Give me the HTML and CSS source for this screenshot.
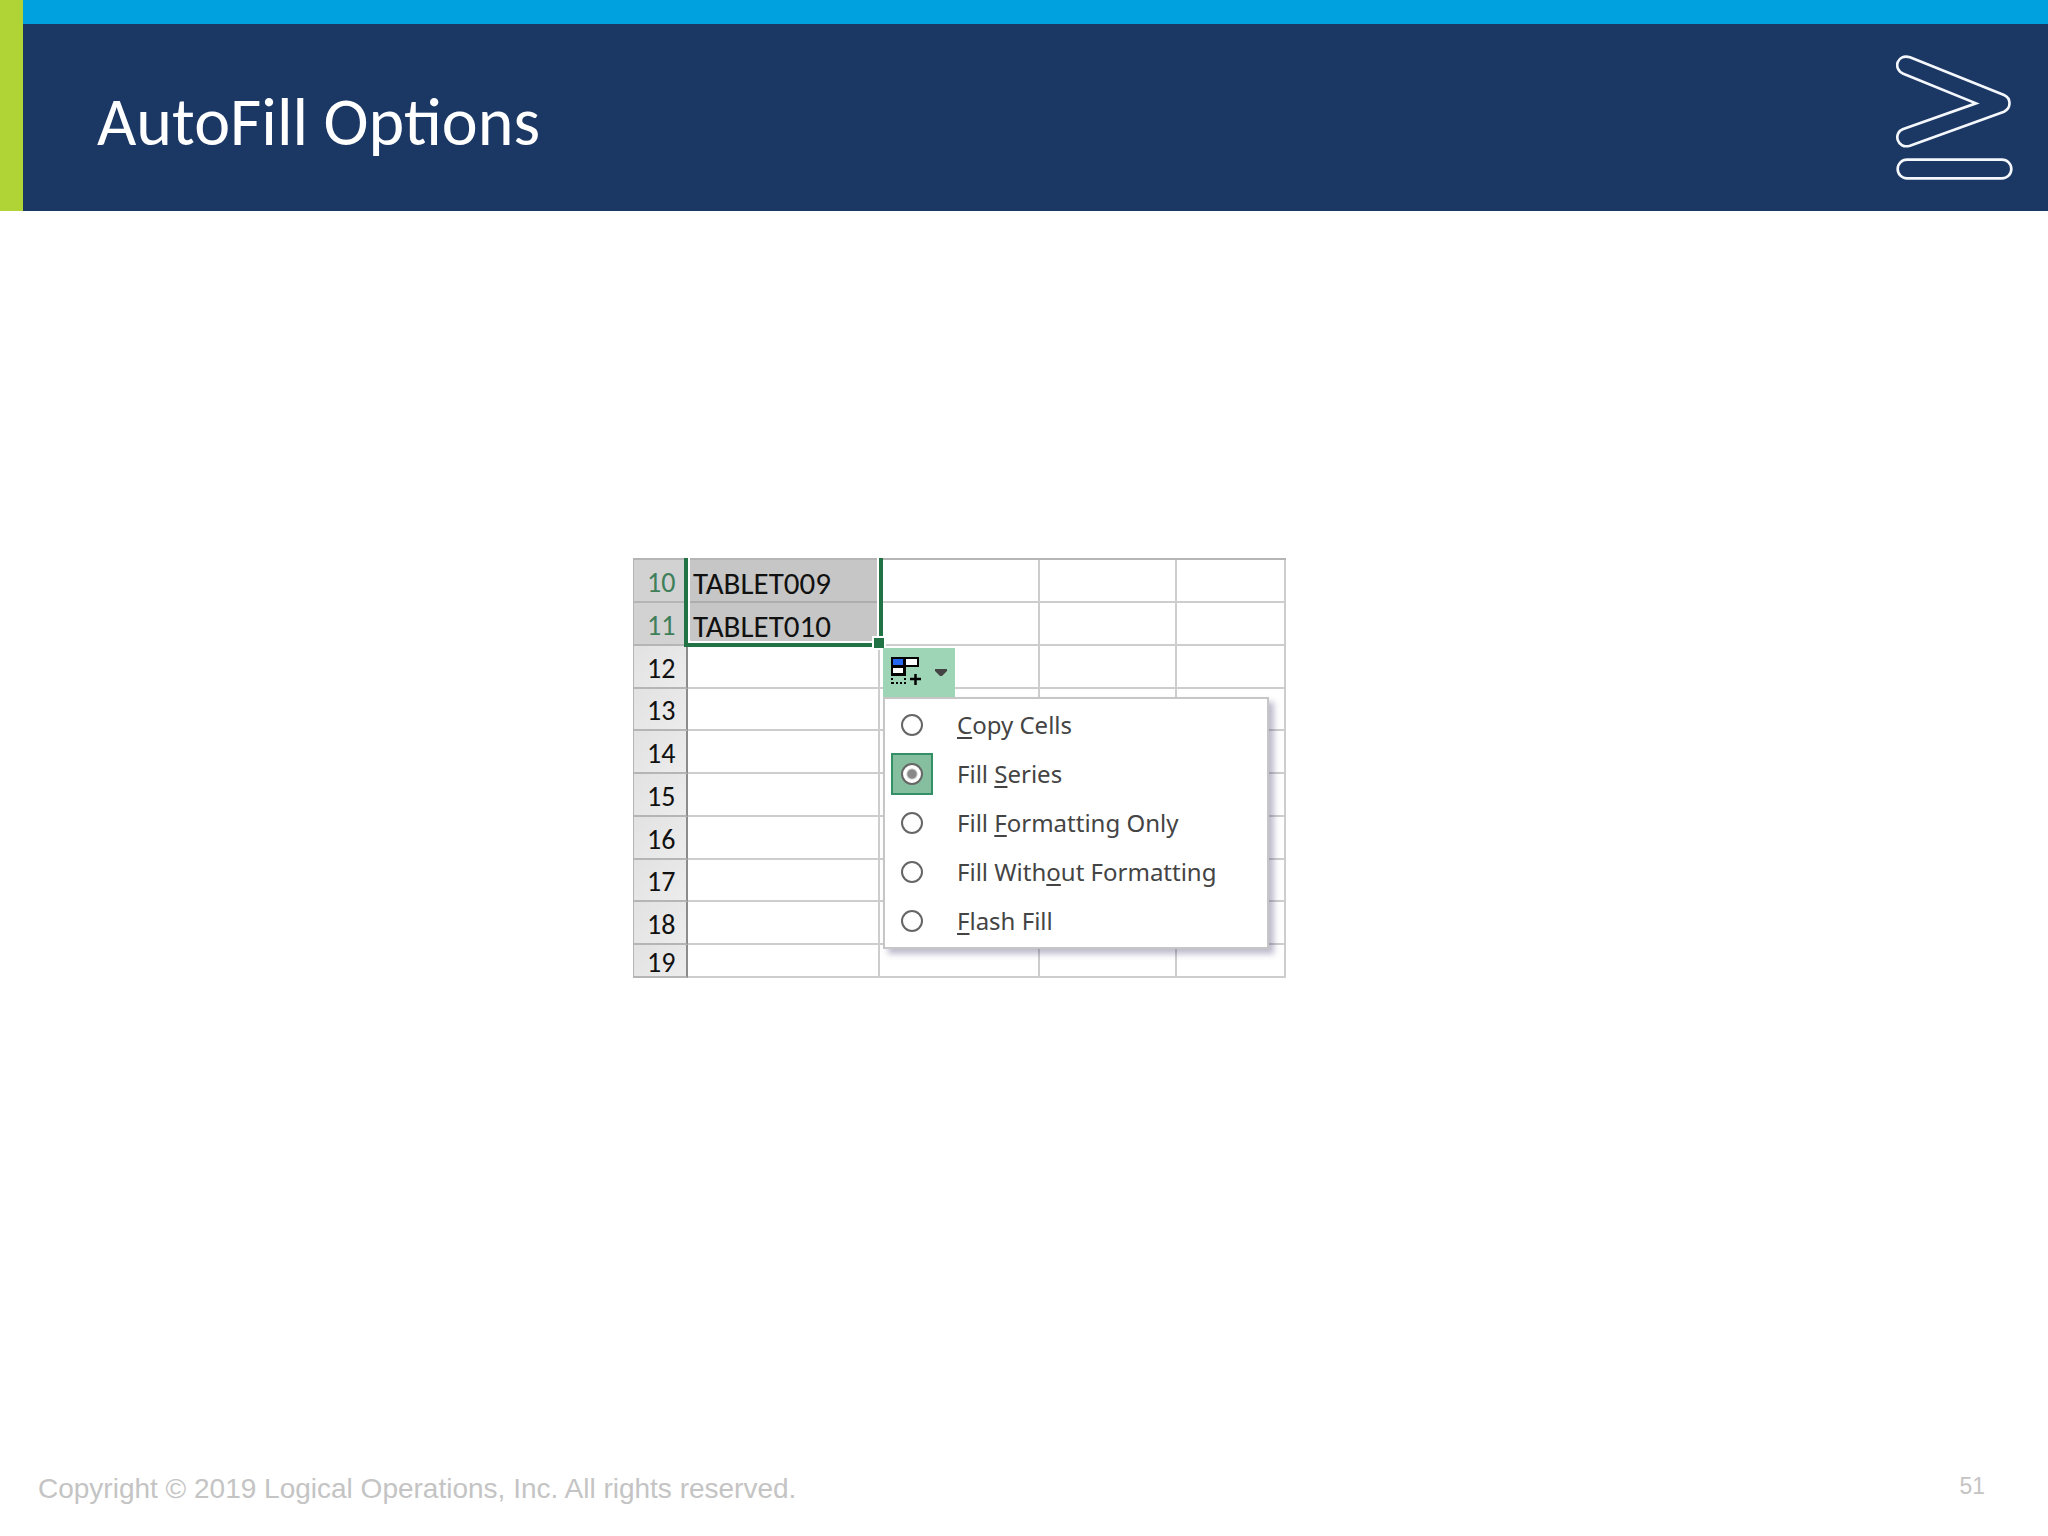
FILE: index.html
```
<!DOCTYPE html>
<html lang="en">
<head>
<meta charset="utf-8">
<title>AutoFill Options</title>
<link rel="stylesheet" href="styles.css">
</head>
<body>
<header class="banner">
  <h1 class="title">AutoFill Options</h1>
  <svg class="logo" viewBox="108 75 354 378" fill="none" stroke="#f4f7fc" stroke-width="8" role="img" aria-label="Logical Operations">
    <path d="M150 82 L432 195 C454 205 454 235 432 245 L150 347 C111 359 98 308 130 297 L348 220 L130 131 C96 116 113 69 150 82 Z"/>
    <rect x="113" y="389" width="341" height="56" rx="28"/>
  </svg>
</header>
<main class="content">
  <div class="sheet">
    <table class="grid">
      <colgroup><col class="col-num"><col class="col-a"><col class="col-b"><col class="col-c"><col></colgroup>
      <tbody>
        <tr class="picked"><th scope="row">10</th><td>TABLET009</td><td></td><td></td><td></td></tr>
        <tr class="picked"><th scope="row">11</th><td>TABLET010</td><td></td><td></td><td></td></tr>
        <tr><th scope="row">12</th><td></td><td></td><td></td><td></td></tr>
        <tr><th scope="row">13</th><td></td><td></td><td></td><td></td></tr>
        <tr><th scope="row">14</th><td></td><td></td><td></td><td></td></tr>
        <tr><th scope="row">15</th><td></td><td></td><td></td><td></td></tr>
        <tr><th scope="row">16</th><td></td><td></td><td></td><td></td></tr>
        <tr><th scope="row">17</th><td></td><td></td><td></td><td></td></tr>
        <tr><th scope="row">18</th><td></td><td></td><td></td><td></td></tr>
        <tr class="last"><th scope="row">19</th><td></td><td></td><td></td><td></td></tr>
      </tbody>
    </table>
    <div class="selection"><span class="handle"></span></div>
    <div class="autofill">
      <button class="trigger" type="button" aria-label="Auto Fill Options">
        <svg class="fill-icon" viewBox="0 0 30 28">
          <path d="M0 0H28V10H15V19H0Z" fill="#000"/>
          <path d="M2 2H12V8H2Z" fill="#2468f2"/>
          <path d="M15 2H26V8H15ZM2 11H12V16H2Z" fill="#fff"/>
          <path d="M1 21V27M1 26H15M14 21V27" fill="none" stroke="#000" stroke-width="2" stroke-dasharray="2 2"/>
          <path d="M19 22H30M24.500 17V28" stroke="#000" stroke-width="2.500"/>
        </svg>
        <svg class="arrow" viewBox="0 0 12 7"><path d="M0 0H12V2L7 7H5L0 2Z" fill="#444"/></svg>
      </button>
      <div class="menu" role="radiogroup" aria-label="Auto Fill Options">
        <label class="option"><span class="mark"><input type="radio" name="fill"></span><span><u>C</u>opy Cells</span></label>
        <label class="option"><span class="mark"><input type="radio" name="fill" checked></span><span>Fill <u>S</u>eries</span></label>
        <label class="option"><span class="mark"><input type="radio" name="fill"></span><span>Fill <u>F</u>ormatting Only</span></label>
        <label class="option"><span class="mark"><input type="radio" name="fill"></span><span>Fill With<u>o</u>ut Formatting</span></label>
        <label class="option"><span class="mark"><input type="radio" name="fill"></span><span><u>F</u>lash Fill</span></label>
      </div>
    </div>
  </div>
</main>
<footer class="footer">
  <span>Copyright © 2019 Logical Operations, Inc. All rights reserved.</span>
  <span class="page-number">51</span>
</footer>
</body>
</html>
```
FILE: styles.css
```
* { box-sizing: border-box; }

body {
  margin: 0;
  min-height: 100vh;
  display: flex;
  flex-direction: column;
  background: #fff;
  font-family: "Liberation Sans", Arial, sans-serif;
}

.banner {
  display: flex;
  justify-content: space-between;
  align-items: flex-start;
  padding: 31px 34px 22px 73px;
  border-top: 24px solid #00a1df;
  background: #1b3764;
  position: relative;
}

/* green strip runs the full height, across the blue top line */
.banner::before {
  content: "";
  position: absolute;
  left: 0;
  top: -24px;
  bottom: 0;
  width: 23px;
  background: #b0d336;
}

.title {
  margin: 0;
  padding-left: 24px;
  font: 400 68px/134px Carlito, Lato, sans-serif;
  color: #fff;
}

.logo { width: 118px; height: 126px; }

.content {
  flex: 1;
  display: flex;
  justify-content: center;
  align-items: flex-start;
  padding: 347px 129px 40px 0;
}

.sheet { position: relative; width: 653px; }

.grid {
  width: 100%;
  table-layout: fixed;
  border-collapse: separate;
  border-spacing: 0;
  border-top: 2px solid #b5b5b5;
  border-left: 1px solid #b5b5b5;
}

.col-num { width: 54px; }
.col-a { width: 192px; }
.col-b { width: 160px; }
.col-c { width: 137px; }

.grid tr { height: 43px; }
.grid tr:nth-child(4n) { height: 42px; }
.grid tr:last-child { height: 33px; }

.grid th,
.grid td {
  padding: 4px 0 0;
  border-right: 2px solid #cdcdcd;
  border-bottom: 2px solid #cdcdcd;
  font: 400 28px/34px Carlito, "Open Sans", sans-serif;
  color: #111;
  text-align: left;
}

.grid th {
  padding-left: 13px;
  border-right-color: #8c8c8c;
  border-bottom-color: #b5b5b5;
  background: linear-gradient(135deg, #e2e2e2, #ececec);
}

.grid td { padding-left: 5px; font-size: 31px; }

.grid .last th { line-height: 27px; }
.grid .last td { padding: 0; }

.grid .picked th { background: #d2d2d2; color: #3f7f5a; }
.picked td:nth-child(2) { background: #c6c6c6; border-bottom-color: #adadad; }

.selection {
  position: absolute;
  left: 51px;
  top: 0;
  width: 199px;
  height: 89px;
  border: 4px solid #217346;
  border-top: 0;
  box-shadow: inset 2px -2px 0 #fff, inset -2px 0 0 #fff;
}

.handle {
  position: absolute;
  right: -7px;
  bottom: -7px;
  width: 14px;
  height: 14px;
  border: 2px solid #fff;
  background: #217346;
}

.autofill { position: absolute; left: 250px; top: 90px; }

.trigger {
  display: flex;
  align-items: flex-start;
  width: 72px;
  height: 49px;
  padding: 9px 8px;
  border: 0;
  background: #9fd5b7;
}

.fill-icon { width: 30px; height: 28px; }
.arrow { width: 12px; height: 7px; margin: 12px 0 0 14px; }

.menu {
  width: 386px;
  padding: 1px 6px 2px;
  border: 2px solid #c6c6c6;
  background: #fff;
  box-shadow: 5px 5px 6px rgba(70, 60, 110, 0.35);
}

.option {
  display: flex;
  align-items: center;
  gap: 24px;
  height: 49px;
  font: 400 24px/36px "Noto Sans", sans-serif;
  color: #444;
}

.option u { text-underline-offset: 3px; text-decoration-thickness: 2px; }

.mark {
  display: grid;
  place-items: center;
  width: 42px;
  height: 42px;
  border: 2px solid transparent;
}

.mark:has(:checked) { border-color: #339066; background: #86bfa0; }

.mark input {
  appearance: none;
  width: 22px;
  height: 22px;
  margin: 0;
  border: 2px solid #666;
  border-radius: 50%;
  background: #fff;
}

.mark input:checked { background: radial-gradient(circle, #888 4px, #fff 6px); }

.footer {
  display: flex;
  justify-content: space-between;
  padding: 0 63px 30px 38px;
  font-size: 28px;
  line-height: 34px;
  color: #c4c4c4;
}

.page-number { font-size: 23px; line-height: 28px; }
```
